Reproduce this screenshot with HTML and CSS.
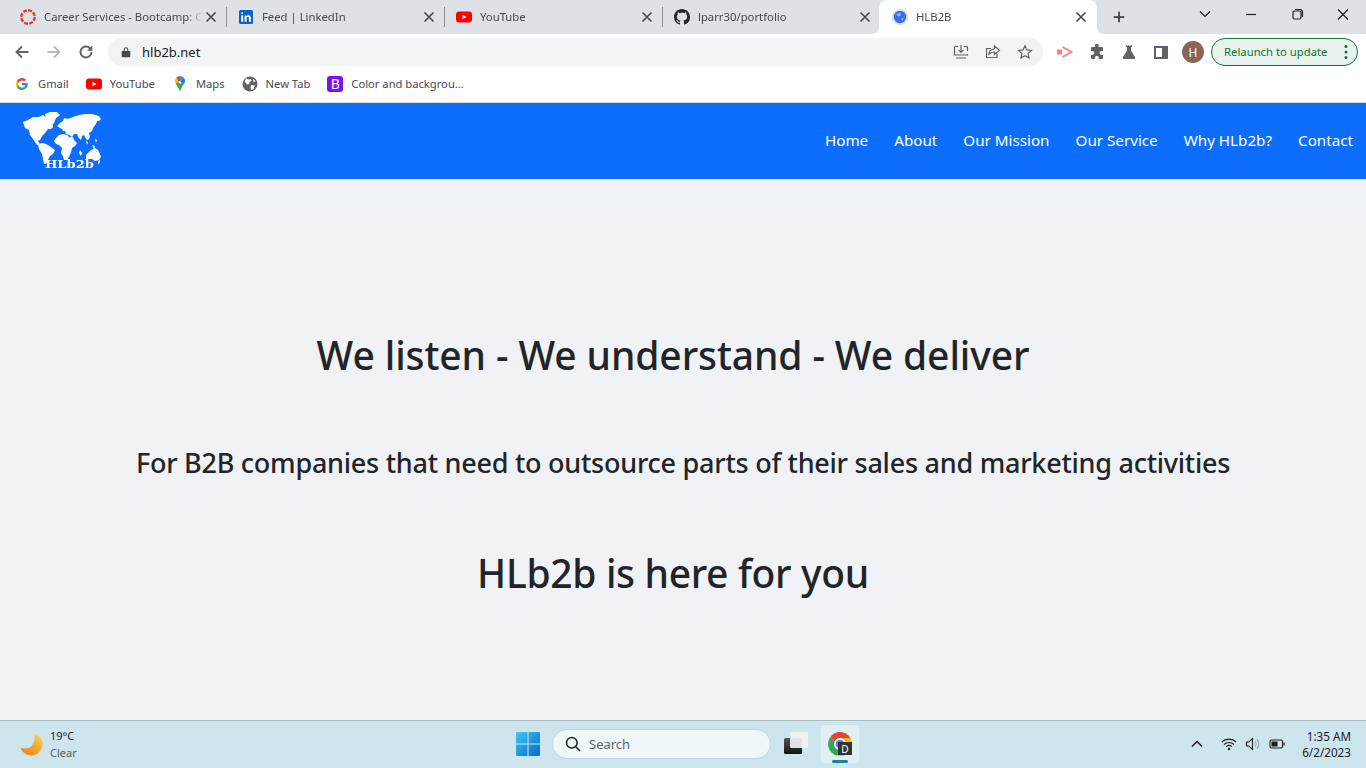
FILE: index.html
```html
<!DOCTYPE html>
<html lang="en">
	<head>
		<meta charset="UTF-8" />
		<meta name="viewport" content="width=device-width, initial-scale=1.0" />
		<title>HLB2B</title>
		<link rel="stylesheet" href="styles.css">
	</head>
	<body>
		<!-- browser chrome -->
		<div class="tabstrip">
			<div class="tab">
				<svg class="favicon" viewBox="0 0 16 16"><circle cx="8" cy="8" r="6.7" fill="none" stroke="#e8392f" stroke-width="2.4" stroke-dasharray="3.9 1.36"/></svg>
				<span class="tab-title">Career Services - Bootcamp: C</span>
				<svg class="tab-close" viewBox="0 0 16 16"><path d="M3.5 3.5l9 9M12.5 3.5l-9 9"/></svg>
			</div>
			<div class="tab">
				<svg class="favicon" viewBox="0 0 16 16"><rect x="1" y="1" width="14" height="14" rx="1.5" fill="#0a66c2"/><path d="M3.2 6.5h2v6.3h-2zM3.100 4.300a1.100 1.100 0 1 0 2.200 0a1.100 1.100 0 1 0-2.200 0zM6.600 6.500h1.900v.9c.4-.6 1.100-1.100 2.100-1.100 1.700 0 2.300 1.100 2.300 2.800v3.700h-2V9.500c0-.8-.2-1.500-1.100-1.500s-1.200.7-1.200 1.500v3.300h-2z" fill="#fff"/></svg>
				<span class="tab-title">Feed | LinkedIn</span>
				<svg class="tab-close" viewBox="0 0 16 16"><path d="M3.5 3.5l9 9M12.5 3.5l-9 9"/></svg>
			</div>
			<div class="tab">
				<svg class="favicon" viewBox="0 0 16 16"><rect y="2.5" width="16" height="11" rx="3" fill="#f00"/><path d="M6.500 5.700v4.600L10.500 8z" fill="#fff"/></svg>
				<span class="tab-title">YouTube</span>
				<svg class="tab-close" viewBox="0 0 16 16"><path d="M3.5 3.5l9 9M12.5 3.5l-9 9"/></svg>
			</div>
			<div class="tab tab-last">
				<svg class="favicon" viewBox="0 0 16 16"><path fill="#24292f" d="M8 0C3.580 0 0 3.580 0 8c0 3.540 2.290 6.530 5.470 7.590.4.070.55-.17.55-.38 0-.19-.01-.82-.01-1.490-2.010.37-2.530-.49-2.690-.94-.09-.23-.48-.94-.82-1.130-.28-.15-.68-.52-.01-.53.63-.01 1.080.58 1.230.82.720 1.210 1.870.87 2.330.66.070-.52.280-.87.510-1.070-1.780-.2-3.640-.89-3.640-3.950 0-.87.310-1.590.820-2.150-.08-.2-.36-1.020.08-2.120 0 0 .67-.21 2.200.82.640-.18 1.320-.27 2-.27s1.360.09 2 .27c1.530-1.040 2.200-.82 2.200-.82.440 1.100.16 1.920.08 2.120.51.560.820 1.270.820 2.150 0 3.070-1.870 3.750-3.650 3.950.29.250.54.730.54 1.480 0 1.070-.01 1.930-.01 2.200 0 .21.150.46.550.38A8.010 8.010 0 0 0 16 8c0-4.420-3.580-8-8-8z"/></svg>
				<span class="tab-title">lparr30/portfolio</span>
				<svg class="tab-close" viewBox="0 0 16 16"><path d="M3.5 3.5l9 9M12.5 3.5l-9 9"/></svg>
			</div>
			<div class="tab tab-active">
				<svg class="favicon" viewBox="0 0 16 16"><circle cx="8" cy="8" r="8" fill="#d6e0fc"/><circle cx="8" cy="8" r="6.2" fill="#3a6cf0"/><path d="M4.500 5.500l3-2 2 2-2 2-2-.5zM9 10l2.500-1.500-.5 3.500z" fill="#8fb0f8"/></svg>
				<span class="tab-title">HLB2B</span>
				<svg class="tab-close" viewBox="0 0 16 16"><path d="M3.5 3.5l9 9M12.5 3.5l-9 9"/></svg>
			</div>
			<svg class="new-tab" viewBox="0 0 16 16"><path d="M8 2v12M2 8h12"/></svg>
			<div class="window-btns">
				<svg class="window-btn" viewBox="0 0 46 34"><path d="M18 11.500l5 5 5-5"/></svg>
				<svg class="window-btn" viewBox="0 0 46 34"><path d="M18 14.500h10"/></svg>
				<svg class="window-btn" viewBox="0 0 46 34"><path d="M19 12.500a1.500 1.500 0 0 1 1.500-1.500h5a1.500 1.500 0 0 1 1.500 1.500v5a1.500 1.500 0 0 1-1.500 1.500h-5a1.500 1.500 0 0 1-1.500-1.500zM21 9.500h5a2.500 2.500 0 0 1 2.500 2.500v5"/></svg>
				<svg class="window-btn" viewBox="0 0 46 34"><path d="M18 9.500l10 10M28 9.500l-10 10"/></svg>
			</div>
		</div>

		<div class="toolbar">
			<svg class="nav-icon" viewBox="0 0 16 16"><path d="M14.500 8H2.500M8 2.500L2.500 8 8 13.500"/></svg>
			<svg class="nav-icon nav-off" viewBox="0 0 16 16"><path d="M1.500 8h12M8 2.500L13.500 8 8 13.500"/></svg>
			<svg class="nav-icon" viewBox="0 0 16 16"><path d="M13.500 8a5.500 5.500 0 1 1-1.600-3.900L13.500 5.700"/><path class="solid" d="M14.300 1.500v5.300H9z"/></svg>
			<div class="omnibox">
				<svg class="lock" viewBox="0 0 12 12"><path d="M2.500 5h7a.8.8 0 0 1 .8.8v4.600a.8.8 0 0 1-.8.8h-7a.8.8 0 0 1-.8-.8V5.800a.8.8 0 0 1 .8-.8zM3.700 5V3.500a2.300 2.300 0 0 1 4.600 0V5H7.200V3.500a1.200 1.200 0 0 0-2.400 0V5z"/></svg>
				<span class="url">hlb2b.net</span>
				<svg class="omni-icon" viewBox="0 0 16 16"><path d="M14.500 7v-3.500a1 1 0 0 0-1-1H11M5 2.500H2.500a1 1 0 0 0-1 1v7.500h13V10M3 14h10M8 1v7M5.500 5.800L8 8.300l2.500-2.500"/></svg>
				<svg class="omni-icon" viewBox="0 0 16 16"><path d="M12 9.500v4H1.500V4.500H6M9.500 2l5 4.200-5 4.200V8c-3 0-4.800.8-6 3 .3-3.600 2.500-5.800 6-6z"/></svg>
				<svg class="omni-icon" viewBox="0 0 16 16"><path d="M8 1.800l1.900 4.100 4.500.5-3.300 3 .9 4.500L8 11.700l-4 2.200.9-4.500-3.300-3 4.500-.5z"/></svg>
			</div>
			<div class="ext-icons">
				<svg class="ext-icon" viewBox="0 0 16 16"><path d="M0 5.500h5v5H0z" fill="#ff7f87"/><path d="M5.500 3l9 5-9 5" fill="none" stroke="#ff7f87" stroke-width="2"/></svg>
				<svg class="ext-icon" viewBox="0 0 16 16"><path class="solid" d="M6 1.500a1.800 1.800 0 0 1 3.600 0V3H13a1 1 0 0 1 1 1v3h-1.500a1.900 1.900 0 0 0 0 3.800H14V14a1 1 0 0 1-1 1H9.800v-1.300a1.900 1.900 0 0 0-3.800 0V15H3a1 1 0 0 1-1-1v-3.200h1.300a1.900 1.900 0 0 0 0-3.800H2V4a1 1 0 0 1 1-1h3z"/></svg>
				<svg class="ext-icon" viewBox="0 0 16 16"><path class="solid" d="M5 1.500h6v1.500h-1v3.500l4.200 7a1 1 0 0 1-.9 1.500H2.700a1 1 0 0 1-.9-1.500L6 6.500V3H5z"/></svg>
				<svg class="ext-icon" viewBox="0 0 16 16"><path class="solid" d="M1 2h14v13H1zM3 4v9h6V4z"/></svg>
				<span class="avatar">H</span>
			</div>
			<div class="relaunch">
				<span>Relaunch to update</span>
				<svg class="relaunch-dots" viewBox="0 0 4 16"><circle cx="2" cy="2.500" r="1.500"/><circle cx="2" cy="8" r="1.500"/><circle cx="2" cy="13.500" r="1.500"/></svg>
			</div>
		</div>

		<div class="bookmarks">
			<div class="bookmark bm-gmail">
				<svg class="bm-icon" viewBox="0 0 48 48"><path fill="#ea4335" d="M24 9.500c3.500 0 6.700 1.200 9.200 3.600l6.900-6.900C35.900 2.400 30.500 0 24 0 14.600 0 6.500 5.400 2.600 13.200l8 6.200C12.400 13.700 17.700 9.500 24 9.500z"/><path fill="#4285f4" d="M47 24.500c0-1.600-.1-3.100-.4-4.500H24v9h12.900c-.6 3-2.200 5.500-4.700 7.200l7.700 6C44.400 38 47 31.800 47 24.500z"/><path fill="#fbbc05" d="M10.500 28.600A14.500 14.500 0 0 1 10.500 19.400l-8-6.200a24 24 0 0 0 0 21.600z"/><path fill="#34a853" d="M24 48c6.500 0 11.900-2.100 15.900-5.800l-7.700-6c-2.200 1.500-4.900 2.300-8.200 2.300-6.300 0-11.600-4.200-13.500-9.900l-8 6.200C6.500 42.600 14.600 48 24 48z"/></svg>
				<span>Gmail</span>
			</div>
			<div class="bookmark">
				<svg class="bm-icon" viewBox="0 0 16 16"><rect y="2.5" width="16" height="11" rx="3" fill="#f00"/><path d="M6.500 5.700v4.600L10.500 8z" fill="#fff"/></svg>
				<span>YouTube</span>
			</div>
			<div class="bookmark">
				<svg class="bm-icon" viewBox="0 0 16 16"><path fill="#4285f4" d="M8 0c1.500 0 2.900.7 3.800 1.800L8.500 5.500A1.900 1.900 0 0 0 8 5.500z"/><path fill="#1a73e8" d="M11.800 1.800c.8.900 1.200 2 1.200 3.200 0 .9-.3 1.700-.6 2.400L9.400 6.900a1.900 1.900 0 0 0-.9-1.400z"/><path fill="#ea4335" d="M4.200 1.800A5 5 0 0 1 8 0v5.100c-.6 0-1.100.3-1.400.7z"/><path fill="#fbbc04" d="M3.600 7.400C3.200 6.700 3 5.900 3 5c0-1.200.4-2.300 1.200-3.200l2.400 4z"/><path fill="#34a853" d="M3.600 7.400l3-1.600c-.2.900.5 2 1.400 2 .6 0 1.100-.2 1.400-.9l3-.5C11.500 9.400 9 11 8 16 7.200 12 5 10 3.600 7.400z"/></svg>
				<span>Maps</span>
			</div>
			<div class="bookmark">
				<svg class="bm-icon" viewBox="0 0 16 16"><circle cx="8" cy="8" r="7.500" fill="#5f6368"/><path d="M4 2.500l3 1 2-.5.500 2L7 6.500l.5 1.500-2.500.5-2.500-3zM9 9l4 .5-1.500 3.500-2 1.300-1-2.300zM11 2.800l2.800 2.500L11.500 6z" fill="#fff"/></svg>
				<span>New Tab</span>
			</div>
			<div class="bookmark">
				<span class="bm-b">B</span>
				<span>Color and backgrou...</span>
			</div>
		</div>

		<!-- page -->
		<nav class="navbar">
			<svg class="logo" viewBox="0 0 80 58">
				<path d="M1 10l5-2 5-3 6 0 4-2 3 2 3-1 3 6 1 5-2 2-3 0-3 4-3 3-2 4-2 1 3 5-4-1-4-6-3-4-1-5-4-2z"/>
				<path d="M23 2l5-2 7 0 3 3-4 3-2 5-3 3-2-4-3-3z"/>
				<path d="M16 32l4-1 4 1 5 3 4 3-2 4-3 2-2 4-2 4-2 0-1-5-1-5-3-5z"/>
				<path d="M35 14l3-3 3-2 1-3 4 1 5-2 6-2 7-1 6 0 7 2 2 3-2 2-2 0-1 3-3 4-1 3-3 2 1 4-2 3-2-1-2-4-2 1-1 4-3-3-1-3-3 0-2 3-3-2-3-1-1-3-2 0-1-2-2-1z"/>
				<path d="M34 26l3-3 4-1 4 1 2 2 4 0 1 3 3 3-2 3-3 2-1 4-1 3-3 5-3 0-1-4-2-3 1-5-3-3-3-1-2-3z"/>
				<path d="M66 41l3-3 4-2 3 2 2 4 1 3-2 3-4 1-3-2-3 0-3 0 0-4z"/>
				<path d="M70 33l3 1-1 3zM64 29l2 1-1 3zM76 49l2-1 0 3-2 1zM58 38l2 3-1 3-2-3zM73 27l2 1-1 3z"/>
				<text class="logo-text" x="23" y="56" textLength="49" lengthAdjust="spacingAndGlyphs">HLb2b</text>
			</svg>
			<div class="nav-links">
				<a>Home</a>
				<a>About</a>
				<a>Our Mission</a>
				<a>Our Service</a>
				<a>Why HLb2b?</a>
				<a>Contact</a>
			</div>
		</nav>

		<main class="hero">
			<h1>We listen - We understand - We deliver</h1>
			<h3>For B2B companies that need to outsource parts of their sales and marketing activities</h3>
			<h2>HLb2b is here for you</h2>
		</main>

		<!-- windows taskbar -->
		<footer class="taskbar">
			<div class="weather">
				<svg class="moon" viewBox="0 0 24 24">
					<defs><linearGradient id="moonfill" x1="0.8" y1="0" x2="0.2" y2="1"><stop offset="0" stop-color="#fbcf4b"/><stop offset="1" stop-color="#ef8216"/></linearGradient></defs>
					<path fill="url(#moonfill)" d="M15 .5C20 2 24 7 23.500 12.500 23 18.500 18 23.500 12 23.500 6.500 23.500 2 20 .5 15.500 5.500 17 10 16 12.500 13 15 10 16 5 15 .5z"/>
				</svg>
				<div class="weather-text">
					<div>19°C</div>
					<div class="weather-sub">Clear</div>
				</div>
			</div>
			<div class="task-center">
				<svg class="win-logo" viewBox="0 0 24 24">
					<defs><linearGradient id="winfill" x1="0" y1="0" x2="1" y2="1"><stop offset="0" stop-color="#3fc8f8"/><stop offset="1" stop-color="#0568c8"/></linearGradient></defs>
					<path fill="url(#winfill)" d="M0 1a1 1 0 0 1 1-1h10.500v11.500H0zM12.500 0H23a1 1 0 0 1 1 1v10.500H12.500zM0 12.500h11.500V24H1a1 1 0 0 1-1-1zM12.500 12.500H24V23a1 1 0 0 1-1 1H12.500z"/>
				</svg>
				<div class="task-search">
					<svg class="search-icon" viewBox="0 0 16 16"><circle cx="6.800" cy="6.800" r="5.300"/><path d="M10.800 10.800L15 15"/></svg>
					<span>Search</span>
				</div>
				<svg class="task-view" viewBox="0 0 24 24">
					<defs><linearGradient id="tvdark" x1="0" y1="0" x2="0" y2="1"><stop offset="0" stop-color="#555"/><stop offset="1" stop-color="#111"/></linearGradient></defs>
					<rect x="0" y="6" width="18" height="16" rx="1.500" fill="url(#tvdark)"/>
					<rect x="6" y="0" width="18" height="16" rx="1.500" fill="#f2f4f5" fill-opacity="0.9"/>
				</svg>
				<div class="task-chrome">
					<svg class="chrome-icon" viewBox="0 0 24 24">
						<path fill="#ea4335" d="M12 0a12 12 0 0 1 10.400 6H12a6 6 0 0 0-5.500 3.500L2.400 5A12 12 0 0 1 12 0z"/>
						<path fill="#34a853" d="M2.400 5l4.100 4.500A6 6 0 0 0 12 18l-2.800 5.700A12 12 0 0 1 2.400 5z"/>
						<path fill="#fbbc05" d="M22.400 6A12 12 0 0 1 9.200 23.700L12 18a6 6 0 0 0 5-9.300L12 6z"/>
						<circle cx="12" cy="12" r="5" fill="#4285f4" stroke="#fff" stroke-width="1.300"/>
					</svg>
					<span class="chrome-badge">D</span>
					<span class="chrome-bar"></span>
				</div>
			</div>
			<div class="tray">
				<svg class="tray-icon tray-chevron" viewBox="0 0 16 16"><path d="M3 10.500L8 5.500l5 5"/></svg>
				<svg class="tray-icon" viewBox="0 0 16 16"><path d="M.8 6a10.500 10.500 0 0 1 14.400 0M3 8.500a7.300 7.300 0 0 1 10 0M5.200 10.700a4.200 4.200 0 0 1 5.600 0"/><circle class="solid" cx="8" cy="13" r="1.200"/></svg>
				<svg class="tray-icon" viewBox="0 0 16 16"><path d="M1.500 6h2.500l3.500-3.500v11L4 10H1.500z"/><path class="faint" d="M10 5.500a3.500 3.500 0 0 1 0 5M12 3.500a6.500 6.500 0 0 1 0 9"/></svg>
				<svg class="tray-icon tray-battery" viewBox="0 0 16 16"><rect x="1" y="4" width="12.500" height="8" rx="1.500"/><rect class="solid" x="2.500" y="5.500" width="6" height="5"/><path class="solid" d="M14.500 6.500h1.200v3h-1.200z"/></svg>
				<div class="clock">
					<div>1:35 AM</div>
					<div>6/2/2023</div>
				</div>
			</div>
		</footer>
	</body>
</html>
```

FILE: styles.css
```css
* {
	box-sizing: border-box;
}

body {
	margin: 0;
	height: 768px;
	overflow: hidden;
	display: flex;
	flex-direction: column;
	font-family: "Noto Sans", "Open Sans", Arial, sans-serif;
	background-color: #f0f2f6;
	color: #212529;
}

/* tabs */
.tabstrip {
	height: 34px;
	padding-left: 8px;
	display: flex;
	align-items: stretch;
	background-color: #dee1e6;
}

.tab {
	width: 218px;
	padding: 0 7px 0 12px;
	display: flex;
	align-items: center;
	position: relative;
}

.tab::after {
	content: "";
	position: absolute;
	right: -1px;
	top: 7px;
	height: 20px;
	width: 1px;
	background-color: #8d9296;
}

.tab-last::after,
.tab-active::after {
	display: none;
}

.tab-active {
	margin-left: -1px;
	padding-left: 13px;
	padding-right: 8px;
	background-color: #fff;
	border-radius: 8px 8px 0 0;
}

.tab-active::before {
	content: "";
	position: absolute;
	left: -6px;
	right: -6px;
	bottom: 0;
	height: 6px;
	background:
		radial-gradient(circle at 0 0, #dee1e6 5.5px, #fff 6px) left / 6px 6px no-repeat,
		radial-gradient(circle at 100% 0, #dee1e6 5.5px, #fff 6px) right / 6px 6px no-repeat;
}

.favicon {
	width: 16px;
	height: 16px;
	margin-right: 8px;
	flex: none;
}

.tab-title {
	flex: 1;
	min-width: 0;
	margin-top: -2px;
	overflow: hidden;
	white-space: nowrap;
	font-size: 11.3px;
	color: #45494e;
	-webkit-mask-image: linear-gradient(to right, #000 90%, transparent);
	mask-image: linear-gradient(to right, #000 90%, transparent);
}

.tab-close {
	width: 16px;
	height: 16px;
	flex: none;
	fill: none;
	stroke: #45494e;
	stroke-width: 1.6;
}

.new-tab {
	width: 14px;
	height: 14px;
	margin: 10px 0 0 15px;
	fill: none;
	stroke: #3c4043;
	stroke-width: 2;
}

.window-btns {
	margin-left: auto;
	display: flex;
}

.window-btn {
	width: 46px;
	height: 34px;
	fill: none;
	stroke: #202124;
	stroke-width: 1.2;
}

/* toolbar */
.toolbar {
	height: 36px;
	padding: 4px 8px 4px 14px;
	display: flex;
	align-items: center;
	background-color: #fff;
}

.nav-icon {
	width: 16px;
	height: 16px;
	margin-right: 16px;
	flex: none;
	fill: none;
	stroke: #5f6368;
	stroke-width: 1.9;
}

.nav-off {
	stroke: #b5b8bc;
}

.solid {
	fill: #5f6368;
	stroke: none;
}

.omnibox {
	width: 935px;
	height: 28px;
	margin-left: -2px;
	padding: 0 10px 0 12px;
	display: flex;
	align-items: center;
	gap: 16px;
	border-radius: 14px;
	background-color: #f1f3f4;
}

.lock {
	width: 12px;
	height: 12px;
	fill: #45494e;
}

.url {
	flex: 1;
	margin-left: -6px;
	font-size: 13px;
	color: #202124;
}

.omni-icon {
	width: 16px;
	height: 16px;
	fill: none;
	stroke: #5f6368;
	stroke-width: 1.2;
}

.ext-icons {
	margin-left: 14px;
	display: flex;
	align-items: center;
	gap: 16px;
}

.ext-icon {
	width: 16px;
	height: 16px;
	flex: none;
}

.avatar {
	width: 22px;
	height: 22px;
	margin-left: -3px;
	display: flex;
	align-items: center;
	justify-content: center;
	border-radius: 50%;
	background-color: #8a6557;
	color: #fff;
	font-size: 12px;
}

.relaunch {
	width: 147px;
	height: 28px;
	margin-left: 7px;
	padding: 0 9px 2px 12px;
	display: flex;
	align-items: center;
	justify-content: space-between;
	border: 1px solid #137333;
	border-radius: 14px;
	background-color: #e9f3ee;
	color: #137333;
	font-size: 11.3px;
	white-space: nowrap;
}

.relaunch-dots {
	width: 4px;
	height: 16px;
	margin-top: 2px;
	fill: #137333;
}

/* bookmarks */
.bookmarks {
	height: 33px;
	padding: 0 0 5px 16px;
	display: flex;
	align-items: center;
	background-color: #fff;
	border-bottom: 1px solid #dadce0;
	font-size: 11.2px;
	color: #45494e;
}

.bookmark {
	margin-right: 17px;
	display: flex;
	align-items: center;
	gap: 8px;
	white-space: nowrap;
}

.bm-gmail {
	gap: 10px;
}

.bm-icon {
	width: 16px;
	height: 16px;
	flex: none;
}

.bm-gmail .bm-icon {
	width: 12px;
	height: 12px;
}

.bm-b {
	width: 16px;
	height: 16px;
	display: flex;
	align-items: center;
	justify-content: center;
	border-radius: 3px;
	background-color: #7a11f0;
	color: #fff;
	font-size: 14px;
}

/* site */
.navbar {
	height: 76px;
	padding: 9px 13px 0 22px;
	display: flex;
	justify-content: space-between;
	background-color: #0d6efd;
}

.logo {
	width: 80px;
	height: 58px;
	fill: #fff;
	filter: blur(0.3px);
}

.logo-text {
	font-family: "DejaVu Serif", "Liberation Serif", serif;
	font-size: 11px;
	font-weight: 700;
}

.nav-links {
	height: 56px;
	display: flex;
	align-items: center;
	gap: 26px;
	font-size: 15.2px;
	color: #fff;
}

.hero {
	flex: 1;
	padding-top: 152px;
	text-align: center;
}

.hero h1,
.hero h2 {
	margin: 0;
	padding-right: 20px;
	font-size: 39px;
	font-weight: 500;
	line-height: 48px;
}

.hero h1 {
	margin-bottom: 67px;
	letter-spacing: -0.1px;
}

.hero h2 {
	letter-spacing: -0.33px;
}

.hero h3 {
	margin: 0 0 69px;
	font-size: 27px;
	font-weight: 500;
	line-height: 34px;
	letter-spacing: -0.25px;
}

/* taskbar */
.taskbar {
	height: 48px;
	padding-bottom: 1px;
	display: grid;
	grid-template-columns: 516px 1fr auto;
	align-items: center;
	background-color: #cde6ee;
	border-top: 1px solid #a9bcc3;
}

.weather {
	padding-left: 20px;
	display: flex;
	align-items: center;
	gap: 7px;
}

.moon {
	width: 23px;
	height: 23px;
}

.weather-text {
	font-size: 11px;
	line-height: 17px;
	color: #1a1a1a;
}

.weather-sub {
	color: #555f64;
}

.task-center {
	display: flex;
	align-items: center;
}

.win-logo {
	width: 24px;
	height: 24px;
}

.task-search {
	width: 219px;
	height: 30px;
	margin-left: 12px;
	padding-left: 12px;
	display: flex;
	align-items: center;
	gap: 8px;
	border: 1px solid #bfd6de;
	border-radius: 15px;
	background-color: #eef7fa;
	font-size: 13px;
	color: #5b6367;
}

.search-icon {
	width: 16px;
	height: 16px;
	fill: none;
	stroke: #1c1c1c;
	stroke-width: 1.5;
}

.task-view {
	width: 24px;
	height: 24px;
	margin-left: 13px;
}

.task-chrome {
	width: 38px;
	height: 38px;
	margin-left: 13px;
	display: flex;
	align-items: center;
	justify-content: center;
	position: relative;
	border-radius: 4px;
	background-color: #dfeff4;
}

.chrome-icon {
	width: 24px;
	height: 24px;
}

.chrome-badge {
	position: absolute;
	right: 7px;
	top: 17px;
	width: 14px;
	height: 13px;
	display: flex;
	align-items: center;
	justify-content: center;
	background-color: #333;
	color: #fff;
	font-size: 10px;
}

.chrome-bar {
	position: absolute;
	left: 11px;
	bottom: 0;
	width: 16px;
	height: 3px;
	border-radius: 2px;
	background-color: #1a8296;
}

.tray {
	padding-right: 15px;
	display: flex;
	align-items: center;
}

.tray-icon {
	width: 16px;
	height: 16px;
	margin-right: 8px;
	fill: none;
	stroke: #1c1c1c;
	stroke-width: 1.1;
}

.tray-chevron {
	margin-right: 16px;
	stroke-width: 1.5;
}

.tray-battery {
	margin-right: 17px;
}

.tray-icon .solid {
	fill: #1c1c1c;
}

.faint {
	stroke: #9aa7ac;
}

.clock {
	font-size: 11.7px;
	line-height: 16px;
	text-align: right;
	color: #1a1a1a;
}
```
